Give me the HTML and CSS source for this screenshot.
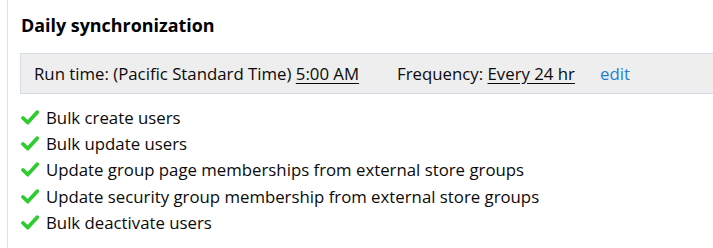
FILE: index.html
```html
<!DOCTYPE html>
<html>
<head>
<meta charset="utf-8">
<link rel="stylesheet" href="styles.css">
</head>
<body>
<div class="panel">
  <h2 class="title">Daily synchronization</h2>
  <div class="schedule">
    <span class="label">Run time: (Pacific Standard Time) <span class="value">5:00 AM</span></span>
    <span class="label freq">Frequency: <span class="value">Every 24 hr</span></span>
    <a class="edit" href="#">edit</a>
  </div>
  <ul class="tasks">
    <li><svg class="check" viewBox="0 0 18 15"><path d="M2 8 L6.8 12.6 L16.2 2.2" fill="none" stroke="#2fcc30" stroke-width="3.7" stroke-linecap="round" stroke-linejoin="round"/></svg>Bulk create users</li>
    <li><svg class="check" viewBox="0 0 18 15"><path d="M2 8 L6.8 12.6 L16.2 2.2" fill="none" stroke="#2fcc30" stroke-width="3.7" stroke-linecap="round" stroke-linejoin="round"/></svg>Bulk update users</li>
    <li><svg class="check" viewBox="0 0 18 15"><path d="M2 8 L6.8 12.6 L16.2 2.2" fill="none" stroke="#2fcc30" stroke-width="3.7" stroke-linecap="round" stroke-linejoin="round"/></svg>Update group page memberships from external store groups</li>
    <li><svg class="check" viewBox="0 0 18 15"><path d="M2 8 L6.8 12.6 L16.2 2.2" fill="none" stroke="#2fcc30" stroke-width="3.7" stroke-linecap="round" stroke-linejoin="round"/></svg>Update security group membership from external store groups</li>
    <li><svg class="check" viewBox="0 0 18 15"><path d="M2 8 L6.8 12.6 L16.2 2.2" fill="none" stroke="#2fcc30" stroke-width="3.7" stroke-linecap="round" stroke-linejoin="round"/></svg>Bulk deactivate users</li>
  </ul>
</div>
</body>
</html>
```

FILE: styles.css
```css
html, body {
  margin: 0;
  padding: 0;
  background: #ffffff;
}
body {
  font-family: "Open Sans", "Noto Sans", sans-serif;
  color: #0a0a0a;
  font-size: 16.8px;
}
.panel {
  margin-left: 7px;
  border-left: 1px solid #dde2e8;
  padding: 13px 0 0 12px;
  min-height: 235px;
}
.title {
  margin: 0 0 16px 1px;
  font-size: 17.9px;
  line-height: 24px;
  font-weight: 700;
  color: #000;
}
.schedule {
  display: flex;
  align-items: center;
  height: 39px;
  background: #eeeeee;
  border: 1px solid #d3dbe4;
  border-right: none;
  padding-left: 13px;
  line-height: 20px;
}
.value {
  text-decoration: underline;
  text-underline-offset: 3px;
}
.freq {
  margin-left: 38px;
}
.edit {
  margin-left: 25px;
  color: #1b7fd3;
  text-decoration: none;
}
.tasks {
  list-style: none;
  margin: 10px 0 0 0;
  padding: 0;
}
.tasks li {
  display: flex;
  align-items: center;
  height: 26.3px;
  padding-left: 1px;
}
.check {
  width: 18px;
  height: 15px;
  margin-right: 7px;
  flex: none;
}
```
